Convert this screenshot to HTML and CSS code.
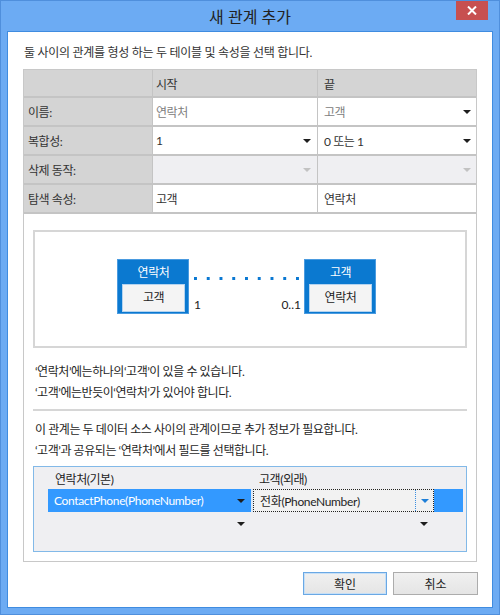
FILE: index.html
```html
<!DOCTYPE html>
<html lang="ko">
<head>
<meta charset="utf-8">
<title>새 관계 추가</title>
<link rel="stylesheet" href="styles.css">
</head>
<body>
<div class="window">
  <div class="titlebar">
    <div class="title">새 관계 추가</div>
    <div class="close"><svg width="10" height="9" viewBox="0 0 10 9"><path d="M1 0.5 L9 8.5 M9 0.5 L1 8.5" stroke="#fff" stroke-width="2" fill="none"/></svg></div>
  </div>
  <div class="client">
    <p class="intro">둘 사이의 관계를 형성 하는 두 테이블 및 속성을 선택 합니다.</p>
    <div class="panel">
      <div class="props">
        <div class="cell head"></div>
        <div class="cell head c2">시작</div>
        <div class="cell head c3">끝</div>

        <div class="cell label">이름:</div>
        <div class="cell val c2 muted"><span>연락처</span></div>
        <div class="cell val c3 muted"><span>고객</span><i class="arrow"></i></div>

        <div class="cell label">복합성:</div>
        <div class="cell val c2"><span>1</span><i class="arrow"></i></div>
        <div class="cell val c3"><span>0 또는 1</span><i class="arrow"></i></div>

        <div class="cell label">삭제 동작:</div>
        <div class="cell val c2 disabled"><span></span><i class="arrow"></i></div>
        <div class="cell val c3 disabled"><span></span><i class="arrow"></i></div>

        <div class="cell label">탐색 속성:</div>
        <div class="cell val c2"><span>고객</span></div>
        <div class="cell val c3"><span>연락처</span></div>
      </div>

      <div class="body">
        <div class="diagram">
          <div class="entity">
            <div class="entity-name">연락처</div>
            <div class="entity-prop">고객</div>
          </div>
          <div class="connector">
            <div class="dots"></div>
            <div class="ends"><span>1</span><span>0..1</span></div>
          </div>
          <div class="entity">
            <div class="entity-name">고객</div>
            <div class="entity-prop">연락처</div>
          </div>
        </div>

        <div class="notes first">
          <p>‘연락처’에는하나의‘고객’이 있을 수 있습니다.</p>
          <p>‘고객’에는반듯이‘연락처’가 있어야 합니다.</p>
        </div>
        <div class="sep"></div>
        <div class="notes second">
          <p>이 관계는 두 데이터 소스 사이의 관계이므로 추가 정보가 필요합니다.</p>
          <p>‘고객’과 공유되는 ‘연락처’에서 필드를 선택합니다.</p>
        </div>

        <div class="fields">
          <div class="fields-head">
            <div class="fh left">연락처(기본)</div>
            <div class="fh right">고객(외래)</div>
          </div>
          <div class="frow selected">
            <div class="fcell left latin"><span>ContactPhone(PhoneNumber)</span><i class="arrow"></i></div>
            <div class="fgap"></div>
            <div class="fcell right focus latin"><span class="ftext">전화(PhoneNumber)</span><span class="fbtn"><i class="arrow blue"></i></span></div>
            <div class="frest"></div>
          </div>
          <div class="frow">
            <div class="fcell left"><span></span><i class="arrow"></i></div>
            <div class="fgap plain"></div>
            <div class="fcell right"><span></span><i class="arrow"></i></div>
          </div>
        </div>
      </div>
    </div>

    <div class="buttons">
      <button class="btn default">확인</button>
      <button class="btn">취소</button>
    </div>
  </div>
</div>
</body>
</html>
```

FILE: styles.css
```css
* { box-sizing: border-box; }
html, body { margin: 0; padding: 0; }
body {
  width: 500px;
  height: 615px;
  overflow: hidden;
  font-family: Lato, "Noto Sans CJK KR", "Noto Sans", sans-serif;
  font-size: 12px;
  letter-spacing: -0.45px;
  color: #1e1e1e;
  background: #fff;
}
p { margin: 0; }

.window {
  width: 500px;
  height: 615px;
  background: #6cabf3;
  border: 1px solid #4f8fdc;
  display: flex;
  flex-direction: column;
}

.titlebar {
  height: 30px;
  flex: none;
  display: grid;
  grid-template-columns: 1fr auto 1fr;
  align-items: start;
}
.title {
  grid-column: 2;
  font-size: 16px;
  letter-spacing: 0;
  line-height: 32px;
  color: #222;
}
.close {
  grid-column: 3;
  justify-self: end;
  margin-right: 11px;
  width: 32px;
  height: 19px;
  background: #c75050;
  display: flex;
  align-items: center;
  justify-content: center;
}

.client {
  flex: 1;
  margin: 0 6px 6px;
  background: #fff;
  border: 1px solid #3f8ce0;
  display: flex;
  flex-direction: column;
}

.intro {
  height: 37px;
  padding: 12px 0 0 16px;
  line-height: 18px;
  letter-spacing: -0.3px;
  color: #333;
}

.panel {
  margin-left: 15px;
  width: 454px;
  height: 493px;
  border: 1px solid #c8c8c8;
  flex: none;
}

/* property grid */
.props {
  display: grid;
  grid-template-columns: 128px 164px 158px;
  grid-template-rows: 26px 27px 27px 27px 27px;
  gap: 2px 1px;
  background: #c4c4c4;
  border-bottom: 2px solid #c4c4c4;
}
.cell {
  display: flex;
  align-items: center;
  padding-left: 4px;
  color: #333;
}
.cell.head, .cell.label { background: #d4d4d4; }
.cell.c2 { padding-left: 3px; }
.cell.c3 { padding-left: 6px; }
.cell.val { background: #fff; justify-content: space-between; }
.cell.val.c2 { padding-right: 6px; }
.cell.val.c3 { padding-right: 5px; }
.cell.muted { color: #808080; }
.cell.disabled { background: #efeff2; }
.cell.disabled .arrow { border-top-color: #c2c2c2; }

.arrow {
  display: block;
  width: 0;
  height: 0;
  border-left: 4px solid transparent;
  border-right: 4px solid transparent;
  border-top: 4px solid #1e1e1e;
}
.arrow.blue { border-top-color: #1e7fd8; }

.body {
  padding: 0 9px;
}

/* diagram */
.diagram {
  margin-top: 16px;
  width: 434px;
  height: 118px;
  border: 2px solid #d6d6d6;
  display: flex;
  align-items: flex-start;
  padding: 27px 0 0 82px;
}
.entity {
  width: 72px;
  height: 55px;
  background: #0b79d0;
  border: 1px solid #4a9be0;
  padding: 0 3px 1px 4px;
  display: flex;
  flex-direction: column;
}
.entity-name {
  height: 24px;
  line-height: 25px;
  text-align: center;
  color: #fff;
}
.entity-prop {
  height: 28px;
  background: #f4f4f4;
  border: 1px solid #b4d3ef;
  text-align: center;
  line-height: 26px;
  color: #222;
}
.connector {
  width: 115px;
  height: 55px;
  display: flex;
  flex-direction: column;
}
.dots {
  margin: 18px 3px 0 5px;
  height: 3px;
  background-image: linear-gradient(90deg, #0a78d2 3px, transparent 3px);
  background-size: 12.75px 3px;
}
.ends {
  margin-top: 17px;
  padding: 0 3px 0 5px;
  display: flex;
  justify-content: space-between;
  line-height: 16px;
  letter-spacing: 0;
  color: #222;
}

/* notes */
.notes {
  padding-left: 2px;
  line-height: 21px;
  color: #1e1e1e;
}
.notes.first { margin-top: 13px; }
.notes.second { margin-top: 8px; }
.sep {
  margin-top: 6px;
  height: 2px;
  background: #d6d6d6;
}

/* fields grid */
.fields {
  margin-top: 5px;
  width: 434px;
  height: 86px;
  border: 1px solid #82b9e8;
  background: #efeff2;
}
.fields-head {
  height: 22px;
  display: flex;
  padding-top: 4px;
  line-height: 18px;
  color: #222;
}
.fh.left { width: 225px; padding-left: 21px; }
.fh.right { padding-left: 0; }

.frow {
  margin-left: 14px;
  width: 415px;
  height: 23px;
  display: flex;
}
.frow.selected { background: #3399ff; }
.fcell {
  height: 23px;
  display: flex;
  align-items: center;
  justify-content: space-between;
}
.latin { letter-spacing: -0.35px; }
.fcell.left {
  width: 203px;
  padding: 0 6px;
  color: #fff;
}
.fgap { width: 2px; background: #dbe8f6; }
.fgap.plain { background: transparent; }
.fcell.right {
  width: 181px;
  padding: 0 6px 0 0;
}
.fcell.right.focus {
  padding: 0;
  background: #f2f2f2;
  border: 1px dotted #222;
  color: #1e1e1e;
}
.ftext { padding-left: 6px; }
.fbtn {
  width: 18px;
  height: 100%;
  border-left: 1px dotted #3a8ee0;
  display: flex;
  align-items: center;
  justify-content: center;
}
.frest { flex: 1; }

/* buttons */
.buttons {
  margin-top: 10px;
  padding-right: 14px;
  display: flex;
  justify-content: flex-end;
  gap: 6px;
}
.btn {
  height: 23px;
  width: 85px;
  font-family: Lato, "Noto Sans CJK KR", "Noto Sans", sans-serif;
  font-size: 12px;
  letter-spacing: 0;
  color: #1e1e1e;
  background: linear-gradient(#f0f0f0, #e5e5e5);
  border: 1px solid #acacac;
  padding: 0;
}
.btn.default {
  width: 84px;
  border-color: #6aa8e4;
  box-shadow: inset 0 0 0 1px #c6dff6;
}
```
